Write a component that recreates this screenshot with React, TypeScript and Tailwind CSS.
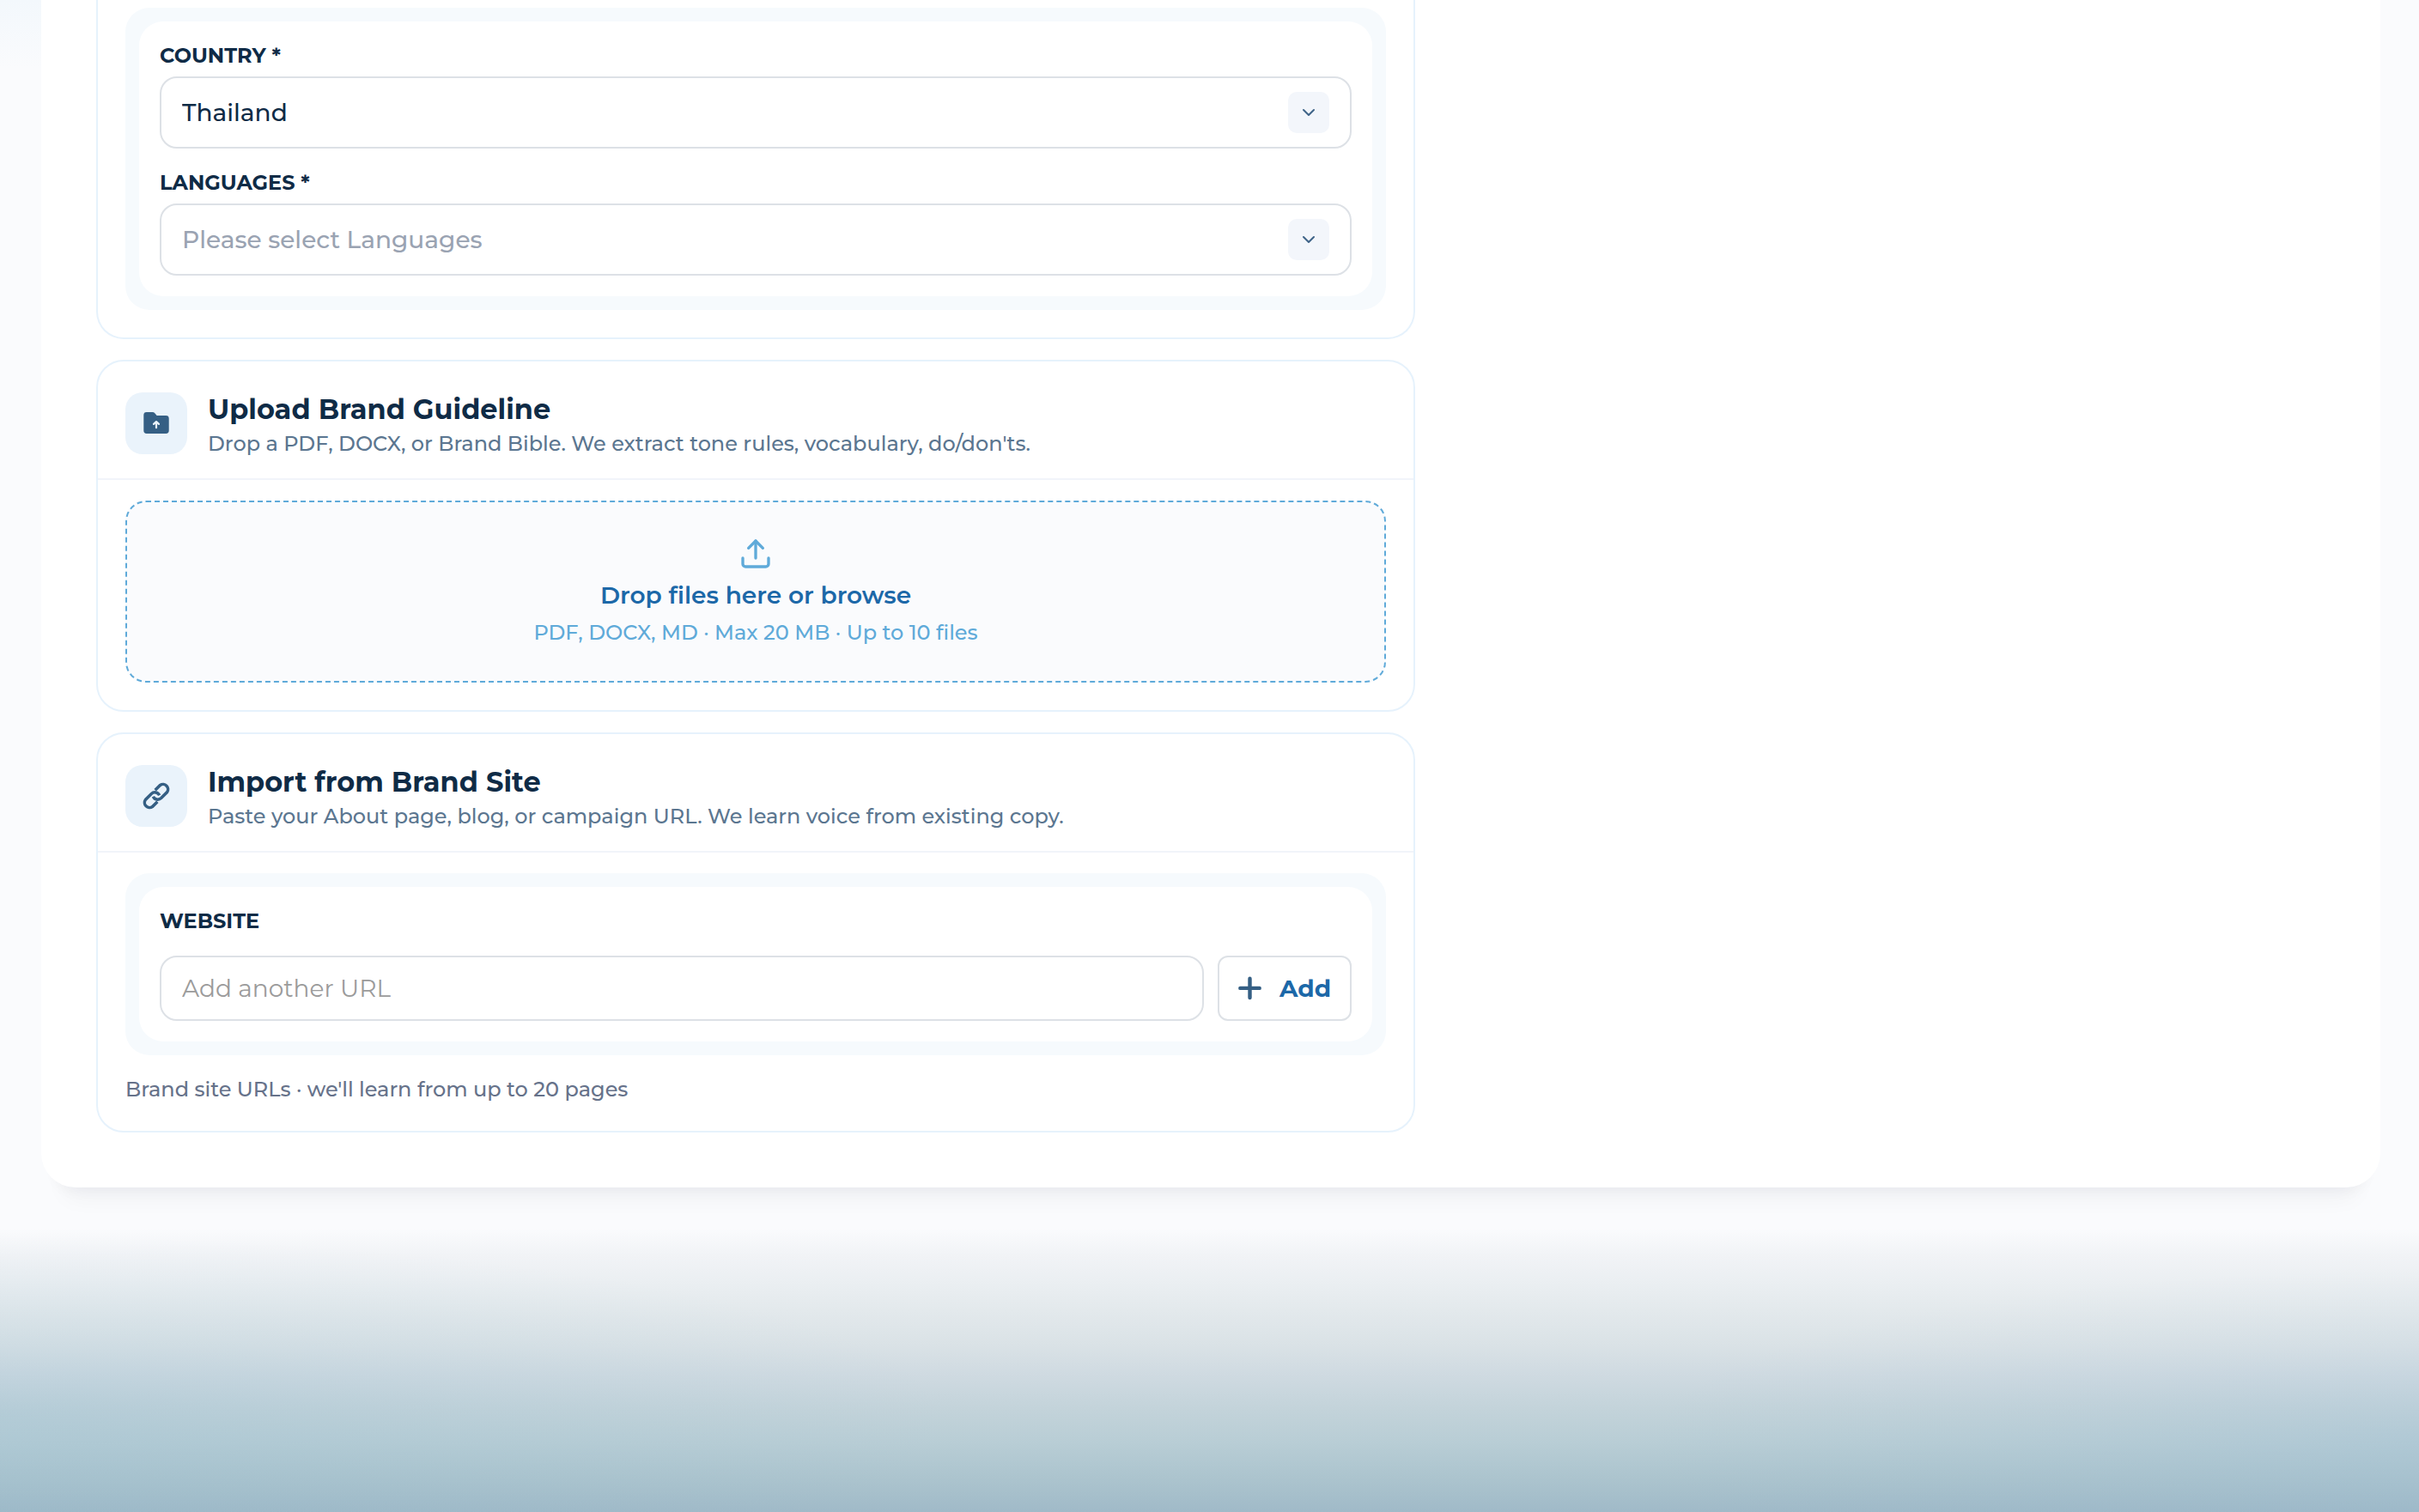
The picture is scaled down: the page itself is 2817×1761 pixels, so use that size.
import React from "react";
import { Upload, ChevronDown } from "lucide-react";

const FONT = "font-['Montserrat','Inter','Liberation_Sans',sans-serif]";

// Page backdrop: a faint tint at the top left and a misty blue rise along the bottom, denser at both sides.
const BACKDROP =
  "bg-[#fafbfd] bg-[image:linear-gradient(to_bottom,#f3f8fc,#fafbfd00),radial-gradient(ellipse_1100px_210px_at_0%_66%,rgba(130,180,205,0.22),rgba(130,180,205,0.1)_50%,rgba(130,180,205,0)),radial-gradient(ellipse_900px_200px_at_100%_75%,rgba(130,175,210,0.16),rgba(130,175,210,0.07)_50%,rgba(130,175,210,0)),linear-gradient(to_bottom,#fafbfd_0px,#f1f3f6_32px,#ebeff2_60px,#e3e9ec_95px,#dae2e6_135px,#cfdae1_170px,#c3d3da_210px,#b8cdd5_250px,#acc4ce_290px,#a0bac8_330px)] bg-[position:top_left,bottom,bottom,bottom] bg-[size:48px_80px,100%_330px,100%_330px,100%_330px] bg-no-repeat";

function Card({ children, className = "" }: { children: React.ReactNode; className?: string }) {
  return <section className={`border-2 border-[#e6f2fc] bg-white ${className}`}>{children}</section>;
}

function Inset({ children }: { children: React.ReactNode }) {
  return (
    <div className="rounded-[28px] bg-[#f6fafd] p-4">
      <div className="rounded-[28px] bg-white p-6">{children}</div>
    </div>
  );
}

function CardHeader({ icon, title, text }: { icon: React.ReactNode; title: string; text: string }) {
  return (
    <header className="flex items-start gap-6 border-b-2 border-[#f1f4fa] px-8 pt-9 pb-6">
      <span className="flex size-[72px] shrink-0 items-center justify-center rounded-[20px] bg-[#eaf3fb] text-[#355f84]">
        {icon}
      </span>
      <div className="flex flex-col gap-1">
        <h2 className="text-[32px] leading-10 font-bold text-[#0f2b46]">{title}</h2>
        <p className="text-2xl leading-8 font-medium text-[#5b7690]">{text}</p>
      </div>
    </header>
  );
}

function SelectField({ id, label, value, muted }: { id: string; label: string; value: string; muted?: boolean }) {
  return (
    <div className="flex flex-col gap-2">
      <label htmlFor={id} className="text-2xl leading-8 font-bold text-[#0f2b46] uppercase">
        {label}
      </label>
      <div className="relative">
        <select
          id={id}
          className={`h-[84px] w-full appearance-none rounded-[20px] border-2 border-[#dde1e6] bg-white px-6 text-[28px] font-medium ${muted ? "text-[#9aa3b2]" : "text-[#0f2b46]"}`}
        >
          <option>{value}</option>
        </select>
        <span className="pointer-events-none absolute inset-y-0 right-[26px] my-auto flex size-12 items-center justify-center rounded-[10px] bg-[#f3f6fb] text-[#3f6488]">
          <ChevronDown size={24} strokeWidth={2} />
        </span>
      </div>
    </div>
  );
}

function FolderUpIcon() {
  return (
    <svg viewBox="0 0 36 36" className="size-9" aria-hidden="true">
      <path
        fill="currentColor"
        d="M3.300 8.400A3.400 3.400 0 0 1 6.700 5H13.600C14.700 5 15.600 5.400 16.300 6.200L18.600 9H29.300A3.400 3.400 0 0 1 32.700 12.400V26.600A3.400 3.400 0 0 1 29.300 30H6.700A3.400 3.400 0 0 1 3.300 26.600Z"
      />
      <path d="M18 23.200v-6.400M15 18.900l3-2.800 3 2.800" fill="none" stroke="#eaf3fb" strokeWidth="2.200" strokeLinecap="round" strokeLinejoin="round" />
    </svg>
  );
}

function LinkIcon() {
  return (
    <svg viewBox="72 72 108 108" className="size-9" fill="none" stroke="currentColor" strokeWidth="10.500" aria-hidden="true">
      <path d="M122 106L139.600 88.400A17.500 17.500 0 0 1 163.900 112.700L143 133.600A17.500 17.500 0 0 1 115 128" />
      <path d="M130 146L112.400 163.600A17.500 17.500 0 0 1 88.100 139.300L109 118.400A17.500 17.500 0 0 1 137 124" />
    </svg>
  );
}

export default function App() {
  return (
    <div className={`${FONT} ${BACKDROP} min-h-screen pr-[45px] pl-12`}>
      <main className="grid grid-cols-[3fr_2fr] gap-9 rounded-b-[40px] bg-white px-16 pb-16 shadow-[0_40px_28px_-28px_rgba(15,23,42,0.045),0_20px_16px_-16px_rgba(15,23,42,0.04)]">
        <div className="flex flex-col gap-6">
          <Card className="rounded-b-[32px] border-t-0 px-8 pt-[9px] pb-8">
            <Inset>
              <div className="flex flex-col gap-6">
                <SelectField id="country" label="Country *" value="Thailand" />
                <SelectField id="languages" label="Languages *" value="Please select Languages" muted />
              </div>
            </Inset>
          </Card>

          <Card className="rounded-[32px]">
            <CardHeader
              icon={<FolderUpIcon />}
              title="Upload Brand Guideline"
              text="Drop a PDF, DOCX, or Brand Bible. We extract tone rules, vocabulary, do/don'ts."
            />
            <div className="px-8 pt-6 pb-8">
              <button
                type="button"
                className="flex w-full flex-col items-center rounded-3xl border-2 border-dashed border-[#5faad9] bg-[#fafbfd] py-10"
              >
                <Upload size={40} strokeWidth={2} className="text-[#5faad9]" />
                <span className="mt-2 text-[28px] leading-10 font-semibold text-[#1c68a8]">Drop files here or browse</span>
                <span className="mt-2 text-2xl leading-8 font-medium text-[#5faad9]">PDF, DOCX, MD · Max 20 MB · Up to 10 files</span>
              </button>
            </div>
          </Card>

          <Card className="rounded-[32px]">
            <CardHeader
              icon={<LinkIcon />}
              title="Import from Brand Site"
              text="Paste your About page, blog, or campaign URL. We learn voice from existing copy."
            />
            <div className="flex flex-col gap-6 px-8 pt-6 pb-8">
              <Inset>
                <div className="flex flex-col gap-6">
                  <label htmlFor="website" className="text-2xl leading-8 font-bold text-[#0f2b46] uppercase">
                    Website
                  </label>
                  <div className="flex gap-4">
                    <input
                      id="website"
                      type="url"
                      placeholder="Add another URL"
                      className="h-[76px] min-w-0 flex-1 rounded-[20px] border-2 border-[#dde1e6] bg-white px-6 text-[28px] text-[#0f2b46] placeholder:text-[#9b9b9b]"
                    />
                    <button
                      type="button"
                      className="flex w-[156px] items-center gap-5 rounded-xl border-2 border-[#dde1e6] bg-white pl-[22px] text-[28px] font-bold text-[#1c68a8]"
                    >
                      <svg viewBox="0 0 28 28" className="size-7 text-[#355f84]" fill="none" stroke="currentColor" strokeWidth="4.400" strokeLinecap="round" aria-hidden="true">
                        <path d="M13.500 2.700v22.400M2.300 13.900h22.400" />
                      </svg>
                      Add
                    </button>
                  </div>
                </div>
              </Inset>
              <p className="text-2xl leading-8 font-medium text-[#66728a]">Brand site URLs · we'll learn from up to 20 pages</p>
            </div>
          </Card>
        </div>
      </main>
    </div>
  );
}
